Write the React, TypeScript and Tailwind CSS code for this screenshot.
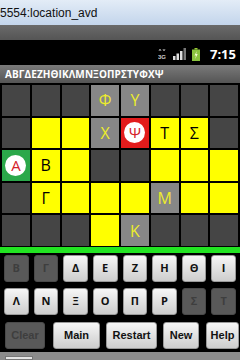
import React from 'react'

type Cell = { kind: 'd' | 'y' | 'g' | 'r' | 'a'; ch?: string }

const parse = (s: string): Cell => {
  const [kind, ch] = s.split(':')
  return { kind: kind as Cell['kind'], ch }
}

const GRID: Cell[][] = [
  ['d', 'd', 'd', 'g:Φ', 'g:Υ', 'd', 'd', 'd'],
  ['d', 'y', 'y', 'g:Χ', 'r:Ψ', 'y:Τ', 'y:Σ', 'd'],
  ['a:Α', 'y:Β', 'y', 'd', 'd', 'y', 'y', 'y'],
  ['d', 'y:Γ', 'y', 'y', 'y', 'g:Μ', 'y', 'y'],
  ['d', 'd', 'd', 'y', 'g:Κ', 'd', 'd', 'd'],
].map((r) => r.map(parse))

const KEYS1 = [['Β', true], ['Γ', true], ['Δ'], ['Ε'], ['Ζ'], ['Η'], ['Θ'], ['Ι']] as [string, boolean?][]
const KEYS2 = [['Λ'], ['Ν'], ['Ξ'], ['Ο'], ['Π'], ['Ρ'], ['Σ', true], ['Τ', true]] as [string, boolean?][]

function GridCell({ cell }: { cell: Cell }) {
  if (cell.kind === 'd') return <div className="bg-[#454545]" />
  if (cell.kind === 'y')
    return (
      <div className="bg-[#ffff00] flex items-center justify-center text-[16px] text-black">{cell.ch}</div>
    )
  if (cell.kind === 'g')
    return (
      <div className="bg-[#878787] flex items-center justify-center text-[16px] text-[#ecec2c]">{cell.ch}</div>
    )
  // player / target tokens
  return (
    <div className={`flex items-center justify-center ${cell.kind === 'r' ? 'bg-[#e21c1c]' : 'bg-[#2ba84a]'}`}>
      <div className="w-[21px] h-[21px] rounded-full bg-white flex items-center justify-center text-[15px] leading-none text-[#d4202a]">
        {cell.ch}
      </div>
    </div>
  )
}

function Key({ label, off }: { label: string; off?: boolean }) {
  return (
    <div
      className={`h-full rounded-[3px] flex items-center justify-center text-[11px] font-bold border ${
        off
          ? 'bg-[#595959] border-[#4a4a4a] text-[#3e3e3e]'
          : 'bg-gradient-to-b from-[#f6f6f6] to-[#cdcdcd] border-[#9a9a9a] text-[#111]'
      }`}
    >
      {label}
    </div>
  )
}

function StatusIcons() {
  return (
    <div className="flex items-center">
      {/* 3G data */}
      <svg width="8" height="12" viewBox="0 0 8 12" className="mr-[7px]">
        <path d="M1 3 L2 1 L3 3 M5 1 L6 3 L7 1" stroke="#bbb" strokeWidth="0.8" fill="none" />
        <text x="0" y="11" fontSize="6" fontWeight="bold" fill="#ccc" fontFamily="Liberation Sans, sans-serif">3G</text>
      </svg>
      {/* signal */}
      <svg width="13" height="12" viewBox="0 0 13 12" className="mr-[6px]">
        <rect x="0" y="8" width="2.5" height="4" fill="#ddd" />
        <rect x="3.5" y="5.5" width="2.5" height="6.5" fill="#ddd" />
        <rect x="7" y="3" width="2.5" height="9" fill="#ddd" />
        <rect x="10.5" y="0" width="2.5" height="12" fill="#777" />
      </svg>
      {/* battery */}
      <svg width="8" height="13" viewBox="0 0 8 13" className="mr-[10px]">
        <rect x="2.5" y="0" width="3" height="1.5" fill="#9c3" />
        <rect x="0" y="1.5" width="8" height="11.5" fill="#8bc53f" />
        <path d="M4.8 3 L2.5 7.5 L4 7.5 L3.2 11 L5.7 6 L4.2 6 Z" fill="#f4ffd0" />
      </svg>
      <span className="text-white text-[13px] font-bold leading-none">7:15</span>
    </div>
  )
}

export default function App() {
  return (
    <div className="w-[240px] h-[360px] overflow-hidden bg-black flex flex-col font-['Open_Sans',_'DejaVu_Sans',_sans-serif]">
      {/* emulator window title */}
      <div className="h-[25px] shrink-0 bg-gradient-to-b from-[#e3ecf7] to-[#c3d5eb] flex items-center">
        <span className="text-[12px] text-[#111] font-['Liberation_Sans',_sans-serif]">5554:location_avd</span>
      </div>
      <div className="h-[15px] shrink-0 bg-gradient-to-b from-[#6a6a6a] to-[#555]" />

      {/* android status bar */}
      <div className="h-[25px] shrink-0 bg-black flex items-center justify-end pr-[4px] pt-[3px]">
        <StatusIcons />
      </div>

      {/* activity title */}
      <div className="h-[18px] shrink-0 bg-gradient-to-b from-[#7a7a7a] to-[#555] flex items-center px-[5px]">
        <span className="text-white text-[10px] font-bold leading-none tracking-[0.1px]">ΑΒΓΔΕΖΗΘΙΚΛΜΝΞΟΠΡΣΤΥΦΧΨ</span>
      </div>

      {/* board */}
      <div className="mt-[2px] h-[161px] shrink-0 grid grid-cols-8 grid-rows-5 gap-[2px] px-[2px]">
        {GRID.flat().map((c, i) => (
          <GridCell key={i} cell={c} />
        ))}
      </div>

      <div className="mt-[1px] h-[6px] shrink-0 bg-[#22e422]" />

      {/* letter keys */}
      <div className="mt-[2px] h-[27px] shrink-0 grid grid-cols-8 gap-[5px] px-[4px]">
        {KEYS1.map(([l, off]) => (
          <Key key={l} label={l} off={off} />
        ))}
      </div>
      <div className="mt-[6px] h-[27px] shrink-0 grid grid-cols-8 gap-[5px] px-[4px]">
        {KEYS2.map(([l, off]) => (
          <Key key={l} label={l} off={off} />
        ))}
      </div>

      {/* actions */}
      <div className="mt-[7px] h-[27px] shrink-0 flex pl-[5px] font-['Liberation_Sans',_sans-serif]">
        <div className="w-[40px]"><Key label="Clear" off /></div>
        <div className="w-[47px] ml-[8px]"><Key label="Main" /></div>
        <div className="w-[51px] ml-[6px]"><Key label="Restart" /></div>
        <div className="w-[36px] ml-[6px]"><Key label="New" /></div>
        <div className="w-[33px] ml-[7px]"><Key label="Help" /></div>
      </div>

      {/* emulator frame bottom */}
      <div className="mt-[3px] flex-1 bg-[#8c8c8c] pt-[4px] pl-[5px]">
        <div className="w-[28px] h-full bg-[#e4e4e4] border border-[#777]" />
      </div>
    </div>
  )
}
